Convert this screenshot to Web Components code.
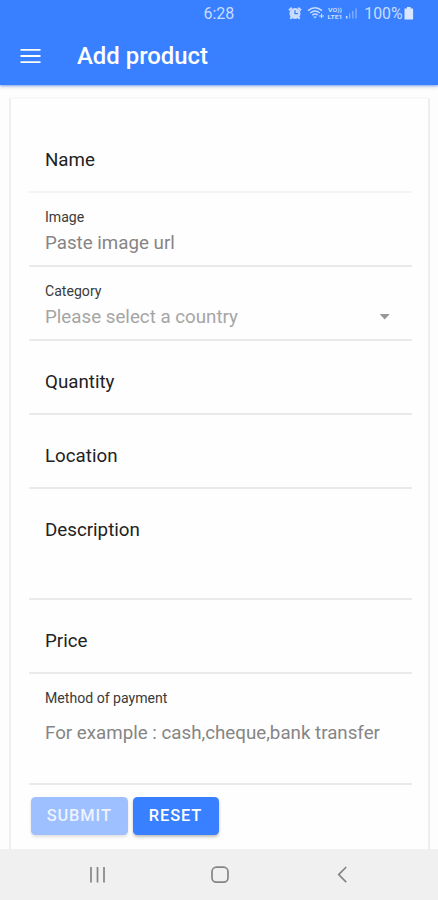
<!DOCTYPE html>
<html lang="en">
<head>
<meta charset="utf-8">
<title>Add product</title>
<style>
html,body{margin:0;height:100%;overflow:hidden;background:#fdfdfe;font-family:Roboto,"Liberation Sans",sans-serif}
</style>
</head>
<body>
<product-app></product-app>
<script>
function define(name, html) {
  const t = document.createElement('template');
  t.innerHTML = html;
  customElements.define(name, class extends HTMLElement {
    constructor() { super(); this.attachShadow({mode: 'open'}).append(t.content.cloneNode(true)); }
  });
}

define('status-bar', `
<style>
:host{display:flex;height:28px;box-sizing:border-box;padding-left:203.5px;align-items:center;color:#c9dcff;font-size:16px;line-height:28px}
svg{display:block;flex:none}
.i{margin-left:53px}
.p{margin-left:5px;font-size:15.8px}
text{font:700 5.2px Roboto,sans-serif;fill:#c9dcff;stroke:none}
</style>
<span>6:28</span>
<svg class="i" width="72" height="28" viewBox="288 0 72 28" fill="none" stroke="#c9dcff">
  <path d="M290 10.4L292.8 7.6M302 10.4L299.2 7.6M291.3 18.7l1.7-1.7M300.7 18.7L299 17" stroke-width="2"/>
  <circle cx="296" cy="13.4" r="5.5" fill="#c9dcff" stroke="none"/>
  <path d="M296 10.2v3.4h3" stroke="#3880ff" stroke-width="1.3"/>
  <path d="M309 10.6q7-5.8 14 0M311.3 13q4.7-4 9.4 0M313.3 15.2q2.7-2.2 5.4 0" stroke-width="1.5"/>
  <path d="M314.2 16.4h3.6L316 18.4z" fill="#c9dcff" stroke="none"/>
  <path d="M320 16h5M322.5 13.7v4.6" stroke-width="1.1"/>
  <text x="329" y="12" textLength="14" lengthAdjust="spacingAndGlyphs">VO))</text>
  <text x="328.5" y="18.6" textLength="15" lengthAdjust="spacingAndGlyphs">LTE1</text>
  <path d="M347.7 16v2.5" stroke-width="1.6"/>
  <path d="M350.7 13.5v5M353.8 11v7.5M357 8.5v10" stroke-width="1.4" opacity=".5"/>
</svg>
<span class="p">100%</span>
<svg width="11" height="28" viewBox="0 0 11 28"><path d="M3.9 7h3.8v1.6h2.4v10.8H1.5V8.6h2.4z" fill="#d9e6ff"/></svg>`);

define('app-header', `
<style>
:host{display:block;height:85px;background:#3880ff;color:#fff;box-shadow:0 1px 2px rgba(56,128,255,.55),0 2px 4px rgba(0,0,0,.12)}
.bar{display:flex;height:56px;align-items:center;padding-left:19.5px;gap:36.5px}
svg{display:block}
h1{font-size:23.9px;font-weight:500;line-height:56px;margin:0;white-space:nowrap}
</style>
<status-bar></status-bar>
<div class="bar"><svg width="21" height="16" viewBox="0 0 21 16"><path d="M.5 1.8h20M.5 8h20M.5 14.2h20" stroke="#fff" stroke-width="1.8"/></svg><h1><slot></slot></h1></div>`);

define('form-field', `
<style>
:host{display:block;height:74px;box-sizing:border-box;border-bottom:2px solid #eaeaea;padding-left:16px;color:#222;white-space:nowrap}
:host([tall]){height:111px}
:host([faint]){border-color:#f4f4f4}
.main{padding-top:29px;font-size:18.74px;line-height:24px}
.small,.value{display:none}
:host([stacked]) .main{display:none}
:host([stacked]) .small{display:block;padding-top:15px;font-size:14.1px;line-height:18px;color:#3a3a3a}
:host([stacked]) .value{display:flex;justify-content:space-between;align-items:center;padding-right:21px;margin-top:5px;font-size:18.74px;line-height:24px;color:#858585}
:host([stacked][tall]) .value{margin-top:14px}
:host([select]) .value{color:#a5a5a5!important}
</style>
<div class="main"><slot></slot></div>
<div class="small"><slot name="label"></slot></div>
<div class="value"><slot name="value"></slot><slot name="icon"></slot></div>`);

define('drop-caret', `
<style>:host{display:block;width:12px;height:24px}svg{display:block}</style>
<svg width="12" height="24" viewBox="0 0 12 24"><path d="M.7 9.1h10L5.7 14.4z" fill="#979797"/></svg>`);

define('push-button', `
<style>
:host{display:block;box-sizing:border-box;height:38px;border-radius:4.5px;background:#3880ff;color:#fff;font-size:16.4px;font-weight:500;line-height:38px;letter-spacing:.9px;text-align:center;box-shadow:0 2px 3px rgba(0,0,0,.25)}
:host([disabled]){background:#9fc0ff;color:#edf3ff;box-shadow:0 2px 3px rgba(0,0,0,.12)}
</style><slot></slot>`);

define('product-card', `
<style>
:host{display:block;box-sizing:border-box;margin:12px 8px 0 9px;height:752px;border:2px solid #eee;border-top-color:#f8f8f8;border-bottom:0;border-radius:3px 3px 0 0;padding:20px 16px 0 18px;background:#fefefe}
.actions{display:flex;gap:4.5px;padding:12px 0 0 1.5px}
</style>
<slot></slot><div class="actions"><slot name="actions"></slot></div>`);

define('system-nav', `
<style>
:host{display:block;height:51px;background:#f0f0f0}
svg{display:block}
</style>
<svg width="438" height="51" viewBox="0 849 438 51" fill="none" stroke="#858585" stroke-width="1.7">
<path d="M91 867v15.5M97.5 867v15.5M104 867v15.5"/>
<rect x="212" y="867.2" width="16" height="15" rx="4.4"/>
<path d="M346.2 867l-7.5 7.6 7.5 7.6"/>
</svg>`);

define('product-app', `
<style>
:host{display:flex;flex-direction:column;width:438px;height:900px;overflow:hidden}
</style>
<app-header>Add product</app-header>
<product-card>
  <form-field faint>Name</form-field>
  <form-field stacked><span slot="label">Image</span><span slot="value">Paste image url</span></form-field>
  <form-field stacked select><span slot="label">Category</span><span slot="value">Please select a country</span><drop-caret slot="icon"></drop-caret></form-field>
  <form-field>Quantity</form-field>
  <form-field>Location</form-field>
  <form-field tall>Description</form-field>
  <form-field>Price</form-field>
  <form-field stacked tall><span slot="label">Method of payment</span><span slot="value">For example : cash,cheque,bank transfer</span></form-field>
  <push-button slot="actions" disabled style="width:97.5px">SUBMIT</push-button>
  <push-button slot="actions" style="width:86px">RESET</push-button>
</product-card>
<system-nav></system-nav>`);
</script>
</body>
</html>
